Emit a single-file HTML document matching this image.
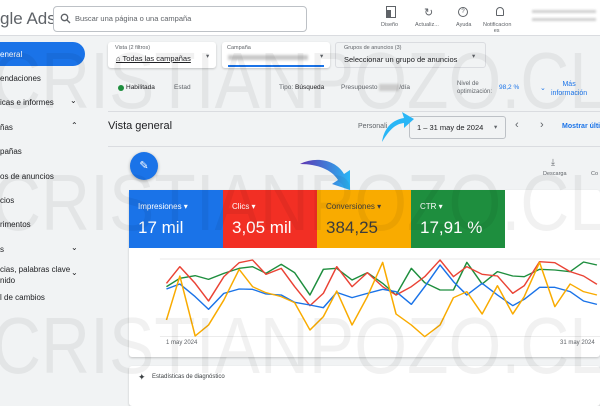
<!DOCTYPE html>
<html><head><meta charset="utf-8"><style>
*{margin:0;padding:0;box-sizing:border-box}
body{width:600px;height:400px;overflow:hidden;background:#f1f3f4;font-family:"Liberation Sans",sans-serif;color:#3c4043;position:relative}
.a{position:absolute;white-space:nowrap}
.hdr{left:0;top:0;width:600px;height:36px;background:#fff;border-bottom:1px solid #dadce0}
.card{background:#fff;border-radius:3px;box-shadow:0 1px 2px rgba(0,0,0,.2)}
.sm{font-size:6.5px;color:#5f6368}
.nav{font-size:8px;color:#202124}
.tile{top:190px;height:58px;color:#fff}
.tile .l{position:absolute;left:9px;top:12px;font-size:8px}
.tile .v{position:absolute;left:9px;top:28px;font-size:17px}
</style></head><body>
<div class="a hdr"></div>
<div class="a" style="left:0;top:9px;font-size:17px;color:#5f6368">gle Ads</div>
<div class="a" style="left:53px;top:6px;width:254px;height:26px;border:1px solid #bdc1c6;border-radius:4px;background:#fff"></div>
<svg class="a" style="left:60px;top:13px" width="11" height="11" viewBox="0 0 11 11"><circle cx="4.5" cy="4.5" r="3.2" fill="none" stroke="#5f6368" stroke-width="1.3"/><path d="M7 7l3 3" stroke="#5f6368" stroke-width="1.3"/></svg>
<div class="a" style="left:75px;top:14px;font-size:7.5px;color:#5f6368">Buscar una página o una campaña</div>
<div class="a" style="left:386px;top:6px;width:10px;height:12px;border:1.3px solid #5f6368"></div>
<div class="a" style="left:386px;top:10px;width:5px;height:8px;background:#5f6368"></div>
<div class="a sm" style="left:381px;top:22px;font-size:5.5px">Diseño</div>
<div class="a sm" style="left:424px;top:6px;font-size:11px">↻</div>
<div class="a sm" style="left:415px;top:22px;font-size:5.5px">Actualiz...</div>
<div class="a" style="left:458px;top:7px;width:10px;height:10px;border:1.2px solid #5f6368;border-radius:50%;font-size:6px;text-align:center;line-height:8px;color:#5f6368">?</div>
<div class="a sm" style="left:456px;top:22px;font-size:5.5px">Ayuda</div>
<div class="a" style="left:496px;top:7px;width:8px;height:9px;border:1.2px solid #5f6368;border-radius:4px 4px 1px 1px"></div>
<div class="a sm" style="left:483px;top:22px;font-size:5.5px">Notificacion<br>&nbsp;&nbsp;&nbsp;&nbsp;&nbsp;&nbsp;&nbsp;es</div>
<div class="a" style="left:532px;top:10px;width:64px;height:3px;background:#d0d0d0;filter:blur(1px)"></div>
<div class="a" style="left:532px;top:18px;width:64px;height:3px;background:#d0d0d0;filter:blur(1px)"></div>

<div class="a" style="left:-20px;top:42px;width:105px;height:24px;background:#1a73e8;border-radius:12px"></div>
<div class="a" style="left:0;top:50px;font-size:8px;color:#fff">eneral</div>
<div class="a nav" style="left:0;top:74px">endaciones</div>
<div class="a nav" style="left:0;top:98px">icas e informes</div>
<div class="a nav" style="left:70px;top:96px">⌄</div>
<div class="a nav" style="left:0;top:123px">ñas</div>
<div class="a nav" style="left:71px;top:121px">⌃</div>
<div class="a nav" style="left:0;top:147px">pañas</div>
<div class="a nav" style="left:0;top:172px">os de anuncios</div>
<div class="a nav" style="left:0;top:196px">cios</div>
<div class="a nav" style="left:0;top:220px">rimentos</div>
<div class="a nav" style="left:0;top:245px">s</div>
<div class="a nav" style="left:71px;top:243px">⌄</div>
<div class="a nav" style="left:0;top:264px;line-height:11px">cias, palabras clave<br>nido</div>
<div class="a nav" style="left:71px;top:268px">⌄</div>
<div class="a nav" style="left:0;top:293px">l de cambios</div>

<div class="a card" style="left:108px;top:42px;width:108px;height:26px"></div>
<div class="a sm" style="left:115px;top:45px;font-size:5.5px">Vista (2 filtros)</div>
<div class="a" style="left:116px;top:54px;font-size:7.5px;color:#202124;text-decoration:underline">⌂ Todas las campañas</div>
<div class="a sm" style="left:206px;top:52px">▾</div>
<div class="a card" style="left:222px;top:42px;width:108px;height:26px"></div>
<div class="a sm" style="left:227px;top:45px;font-size:5.5px">Campaña</div>
<div class="a" style="left:228px;top:55px;width:80px;height:5px;background:#c8c8c8;filter:blur(1.2px)"></div>
<div class="a" style="left:228px;top:65px;width:96px;height:2px;background:#1a73e8"></div>
<div class="a sm" style="left:320px;top:52px">▾</div>
<div class="a" style="left:335px;top:42px;width:151px;height:26px;border:1px solid #dadce0;border-radius:3px;background:#f1f3f4"></div>
<div class="a sm" style="left:344px;top:45px;font-size:5.5px">Grupos de anuncios (3)</div>
<div class="a" style="left:344px;top:55px;font-size:7.5px;color:#202124">Seleccionar un grupo de anuncios</div>
<div class="a sm" style="left:472px;top:52px">▾</div>

<div class="a" style="left:118px;top:85px;width:6px;height:6px;border-radius:50%;background:#1e8e3e"></div>
<div class="a" style="left:126px;top:84px;font-size:6.5px;color:#202124">Habilitada</div>
<div class="a sm" style="left:174px;top:84px">Estad</div>
<div class="a sm" style="left:279px;top:84px">Tipo: <span style="color:#202124">Búsqueda</span></div>
<div class="a sm" style="left:341px;top:84px">Presupuesto <span style="background:#ccc;color:#ccc;filter:blur(1px)">00.000</span>/día</div>
<div class="a sm" style="left:457px;top:80px;font-size:6px;line-height:8px">Nivel de<br>optimización:</div>
<div class="a" style="left:499px;top:84px;font-size:6.5px;color:#1a73e8">98,2 %</div>
<div class="a" style="left:540px;top:84px;font-size:7px;color:#1a73e8">⌄</div>
<div class="a" style="left:551px;top:80px;font-size:7px;color:#1a73e8;line-height:9px;text-align:center">Más<br>información</div>
<div class="a" style="left:108px;top:111px;width:492px;height:1px;background:#dadce0"></div>

<div class="a" style="left:108px;top:120px;font-size:11px;color:#202124">Vista general</div>
<div class="a sm" style="left:358px;top:123px;font-size:7px">Personali</div>
<div class="a" style="left:409px;top:116px;width:97px;height:23px;border:1px solid #bdc1c6;border-radius:3px"></div>
<div class="a" style="left:417px;top:123px;font-size:7.5px;color:#202124">1 – 31 may de 2024</div>
<div class="a sm" style="left:494px;top:123px">▾</div>
<div class="a" style="left:515px;top:119px;font-size:11px;color:#5f6368">‹</div>
<div class="a" style="left:540px;top:119px;font-size:11px;color:#5f6368">›</div>
<div class="a" style="left:562px;top:123px;font-size:7px;color:#1a73e8;font-weight:bold">Mostrar últi</div>
<svg class="a" style="left:378px;top:108px" width="40" height="36" viewBox="0 0 40 36"><path d="M4 34 C6 20 14 12 26 10 L24 4 L36 11 L26 20 L26 15 C16 16 10 24 4 34Z" fill="#29b6f6"/></svg>
<div class="a" style="left:108px;top:146px;width:492px;height:1px;background:#dadce0"></div>

<div class="a" style="left:130px;top:152px;width:28px;height:28px;border-radius:50%;background:#1a73e8;box-shadow:0 1px 3px rgba(0,0,0,.3);color:#fff;font-size:11px;text-align:center;line-height:28px">✎</div>
<div class="a sm" style="left:551px;top:157px;font-size:9px">⤓</div>
<div class="a sm" style="left:543px;top:171px;font-size:5.5px">Descarga</div>
<div class="a sm" style="left:591px;top:171px;font-size:5.5px">Co</div>
<svg class="a" style="left:296px;top:156px" width="60" height="36" viewBox="0 0 60 36"><defs><linearGradient id="g" x1="0" x2="1"><stop offset="0" stop-color="#5e35b1"/><stop offset="1" stop-color="#29b6f6"/></linearGradient></defs><path d="M4 8 C20 0 40 4 48 18 L54 14 L54 34 L36 28 L42 24 C36 14 22 8 4 8Z" fill="url(#g)"/></svg>

<div class="a card" style="left:129px;top:190px;width:471px;height:167px"></div>
<div class="a tile" style="left:129px;width:94px;background:#1a73e8"><div class="l">Impresiones ▾</div><div class="v">17 mil</div></div>
<div class="a tile" style="left:223px;width:94px;background:#f22f24"><div class="l">Clics ▾</div><div class="v">3,05 mil</div></div>
<div class="a tile" style="left:317px;width:94px;background:#f9ab00;color:#3c3c3c"><div class="l">Conversiones ▾</div><div class="v">384,25</div></div>
<div class="a tile" style="left:411px;width:94px;background:#1e8e3e"><div class="l">CTR ▾</div><div class="v">17,91 %</div></div>

<svg class="a" style="left:0;top:140px" width="600" height="260" viewBox="0 0 1568 780" preserveAspectRatio="none">
<g fill="none" stroke-width="4" stroke-linejoin="round">
<line x1="418" y1="357" x2="1568" y2="357" stroke="#e0e0e0" stroke-width="2"/>
<line x1="418" y1="590" x2="1568" y2="590" stroke="#e0e0e0" stroke-width="2"/>
<polyline stroke="#1e8e3e" points="435,440 470,415 510,407 545,418 585,400 625,385 660,380 695,400 735,373 770,398 810,465 845,388 880,385 920,420 960,398 1000,430 1035,465 1075,385 1110,428 1150,450 1185,450 1220,367 1260,432 1300,395 1340,408 1370,410 1410,388 1450,390 1490,395 1525,366 1560,375"/>
<polyline stroke="#ea4335" points="435,430 470,380 510,430 545,483 585,410 625,368 660,360 695,403 735,385 770,440 810,497 845,460 880,380 920,440 960,398 1000,440 1035,465 1075,440 1110,410 1150,360 1185,410 1220,380 1260,403 1300,408 1340,460 1370,437 1410,365 1450,368 1490,395 1525,408 1560,433"/>
<polyline stroke="#1a73e8" points="435,447 470,432 510,470 545,508 585,460 625,447 660,448 695,462 735,465 770,487 810,495 845,503 880,457 920,473 960,460 1000,448 1035,455 1075,493 1110,440 1150,375 1185,425 1220,465 1260,430 1300,465 1340,497 1370,478 1410,442 1450,442 1490,455 1525,483 1560,493"/>
<polyline stroke="#f9ab00" points="435,540 470,408 510,588 545,555 585,480 625,388 660,440 695,458 735,470 770,488 810,570 845,530 880,453 920,555 960,470 1000,367 1035,522 1075,555 1110,590 1150,555 1185,473 1220,455 1260,522 1300,437 1340,522 1370,470 1410,367 1450,500 1490,432 1525,455 1560,465"/>
</g></svg>
<div class="a sm" style="left:166px;top:340px;font-size:6px">1 may 2024</div>
<div class="a sm" style="left:560px;top:340px;font-size:6px">31 may 2024</div>

<div class="a card" style="left:129px;top:366px;width:471px;height:40px"></div>
<div class="a" style="left:138px;top:372px;font-size:9px;color:#3c4043">✦</div>
<div class="a" style="left:152px;top:374px;font-size:6px;color:#3c4043">Estadísticas de diagnóstico</div>

<svg class="a" style="left:0;top:0" width="600" height="400" viewBox="0 0 600 400">
<g font-family="Liberation Sans, sans-serif" font-size="80" fill="rgba(0,0,0,0.055)">
<text x="-8" y="108" textLength="615" lengthAdjust="spacingAndGlyphs">CRISTIANPOZO.CL</text>
<text x="-8" y="230" textLength="615" lengthAdjust="spacingAndGlyphs">CRISTIANPOZO.CL</text>
<text x="-8" y="373" textLength="615" lengthAdjust="spacingAndGlyphs">CRISTIANPOZO.CL</text>
</g></svg>
</body></html>
